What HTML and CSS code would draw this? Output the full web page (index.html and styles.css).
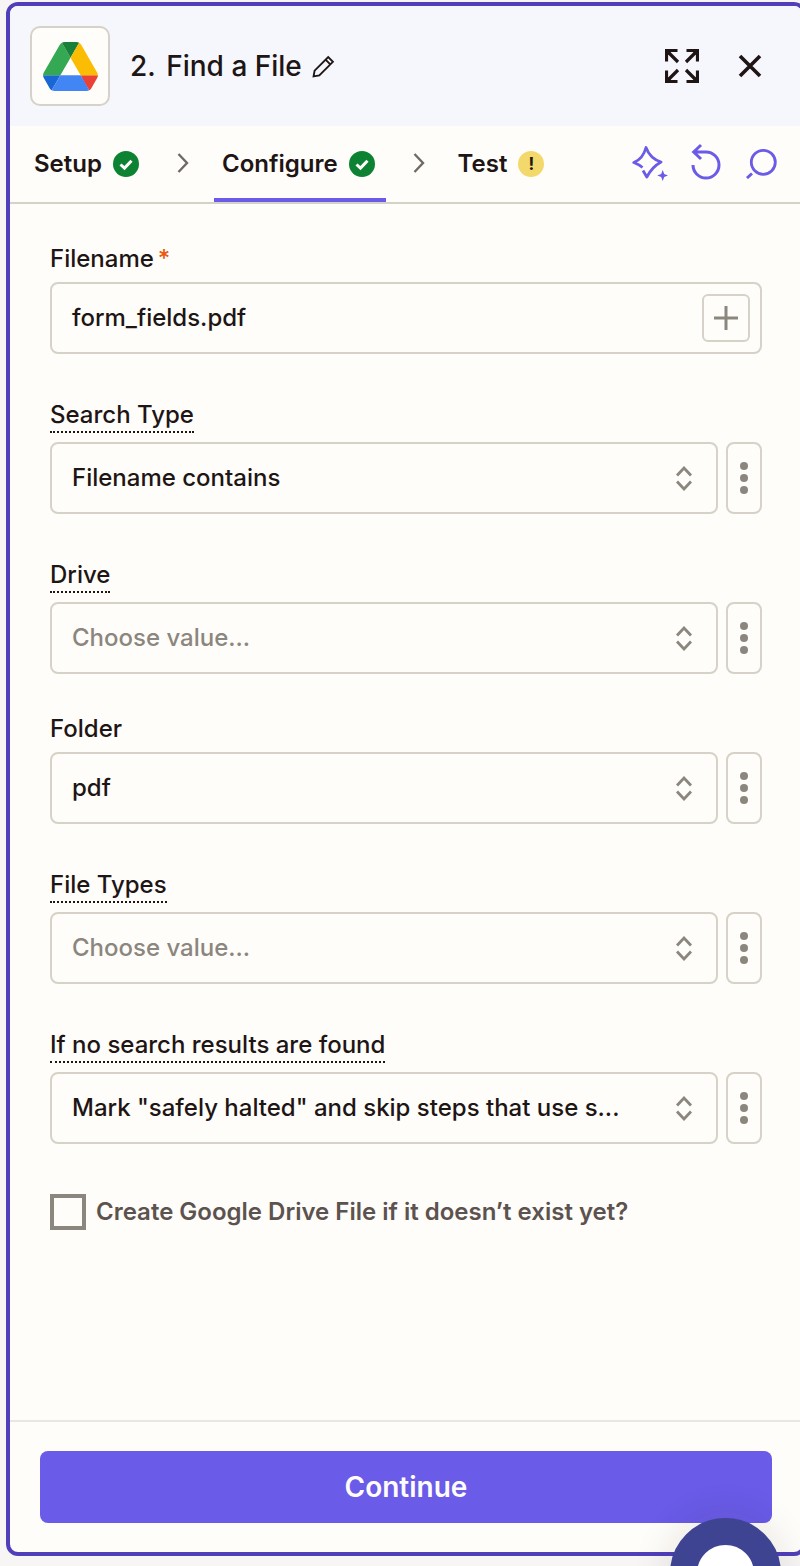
FILE: index.html
```html
<!DOCTYPE html>
<html lang="en">
<head>
<meta charset="utf-8">
<title>Find a File</title>
<link rel="stylesheet" href="styles.css">
</head>
<body>
<svg class="sprite" aria-hidden="true">
  <symbol id="check" viewBox="0 0 26 26"><circle cx="13" cy="13" r="13" fill="#0d8232"/><path d="M7.500 13.500l4 3.600 7-7.400" fill="none" stroke="#fffdf9" stroke-width="3"/></symbol>
  <symbol id="chev" viewBox="0 0 12 22"><path d="M1.500 2L10 11l-8.500 9" fill="none" stroke="#6f6a64" stroke-width="2.400"/></symbol>
  <symbol id="updown" viewBox="0 0 16 25"><path d="M1 9.500L8 2l7 7.500M1 15.500L8 23l7-7.500" fill="none" stroke="#8b867e" stroke-width="2.800"/></symbol>
  <symbol id="dots" viewBox="0 0 8 32"><circle cx="4" cy="4" r="4" fill="#8b867e"/><circle cx="4" cy="16" r="4" fill="#8b867e"/><circle cx="4" cy="28" r="4" fill="#8b867e"/></symbol>
</svg>
<section class="panel">
  <header class="head">
    <div class="app-tile">
      <svg class="drive" viewBox="0 0 87.300 78">
        <path d="m6.600 66.850 3.850 6.650c.8 1.400 1.950 2.500 3.300 3.300l13.750-23.800h-27.500c0 1.550.4 3.100 1.200 4.500z" fill="#1967d2"/>
        <path d="m43.650 25-13.750-23.800c-1.350.8-2.500 1.900-3.300 3.300l-25.400 44a9.060 9.060 0 0 0 -1.200 4.500h27.500z" fill="#34a853"/>
        <path d="m73.550 76.800c1.350-.8 2.500-1.900 3.300-3.300l1.600-2.750 7.650-13.250c.8-1.400 1.200-2.950 1.200-4.500h-27.502l5.852 11.500z" fill="#ea4335"/>
        <path d="m43.650 25 13.750-23.800c-1.350-.8-2.900-1.200-4.500-1.200h-18.500c-1.600 0-3.150.45-4.500 1.200z" fill="#188038"/>
        <path d="m59.800 53h-32.300l-13.750 23.800c1.350.8 2.900 1.200 4.500 1.200h50.800c1.600 0 3.150-.45 4.500-1.200z" fill="#4285f4"/>
        <path d="m73.400 26.500-12.700-22c-.8-1.400-1.950-2.500-3.300-3.300l-13.750 23.800 16.150 28h27.450c0-1.550-.4-3.100-1.200-4.500z" fill="#fbbc04"/>
      </svg>
    </div>
    <h1 class="title"><span class="num">2.</span> Find a File</h1>
    <svg class="pencil" viewBox="0 0 22 22"><path d="M1.500 20.500l1-5.500L15.500 2l4.500 4.500L7 19.500zM13 4.500l4.500 4.500" fill="none" stroke="#201515" stroke-width="1.800"/></svg>
    <div class="head-actions">
      <svg class="expand" viewBox="0 0 34 34"><path d="M0 0H9L0 9zM34 0H25L34 9zM0 34H9L0 25zM34 34H25L34 25z" fill="#201515"/><path d="M1.500 12.500V1.500H12.500M3 3l10 10M21.500 1.500H32.500V12.500M31 3L21 13M1.500 21.500V32.500H12.500M3 31l10-10M21.500 32.500H32.500V21.500M31 31L21 21" fill="none" stroke="#201515" stroke-width="3.200"/></svg>
      <svg class="close" viewBox="0 0 24 24"><path d="M2 2l20 20M22 2L2 22" fill="none" stroke="#201515" stroke-width="3.600"/></svg>
    </div>
  </header>
  <nav class="tabs">
    <div class="tab"><span class="tab-text">Setup</span><svg class="badge"><use href="#check"/></svg></div>
    <div class="sep"><svg class="chev"><use href="#chev"/></svg></div>
    <div class="tab active"><span class="tab-text">Configure</span><svg class="badge"><use href="#check"/></svg></div>
    <div class="sep"><svg class="chev"><use href="#chev"/></svg></div>
    <div class="tab"><span class="tab-text">Test</span><span class="warn">!</span></div>
    <div class="tools">
      <svg class="sparkle" viewBox="0 0 36 38"><path d="M10.500 24.500Q7 21.500 1.800 19.500 11 16 14 4.500 18 15.500 29 19 20 24 14.800 34L11 27.500" fill="none" stroke="#6a5be8" stroke-width="2.800" stroke-linejoin="round"/><path d="M30.700 27l1.500 4 4 1.500-4 1.500-1.500 4-1.500-4-4-1.500 4-1.500z" fill="#6a5be8"/></svg>
      <svg class="undo" viewBox="0 0 32 38"><path d="M2 22A13 13 0 1 0 15 9H3M10 2L2.700 9l7.300 7" fill="none" stroke="#6a5be8" stroke-width="3"/></svg>
      <svg class="search" viewBox="0 0 32 34"><circle cx="17.300" cy="17.300" r="12" fill="none" stroke="#6a5be8" stroke-width="2.800"/><path d="M6 28.500L1 33" fill="none" stroke="#6a5be8" stroke-width="3"/></svg>
    </div>
  </nav>
  <main class="form">
    <div class="field">
      <div class="label">Filename<span class="req">*</span></div>
      <div class="input has-add"><span class="val">form_fields.pdf</span>
        <span class="add"><svg class="plus" viewBox="0 0 24 24"><path d="M12 0v24M0 12h24" stroke="#8b867e" stroke-width="3"/></svg></span>
      </div>
    </div>
    <div class="field">
      <div class="label tip"><span>Search Type</span></div>
      <div class="row">
        <div class="input"><span class="val">Filename contains</span><svg class="updown"><use href="#updown"/></svg></div>
        <div class="more"><svg class="dots"><use href="#dots"/></svg></div>
      </div>
    </div>
    <div class="field">
      <div class="label tip"><span>Drive</span></div>
      <div class="row">
        <div class="input ph"><span class="val">Choose value...</span><svg class="updown"><use href="#updown"/></svg></div>
        <div class="more"><svg class="dots"><use href="#dots"/></svg></div>
      </div>
    </div>
    <div class="field">
      <div class="label">Folder</div>
      <div class="row">
        <div class="input"><span class="val">pdf</span><svg class="updown"><use href="#updown"/></svg></div>
        <div class="more"><svg class="dots"><use href="#dots"/></svg></div>
      </div>
    </div>
    <div class="field">
      <div class="label tip"><span>File Types</span></div>
      <div class="row">
        <div class="input ph"><span class="val">Choose value...</span><svg class="updown"><use href="#updown"/></svg></div>
        <div class="more"><svg class="dots"><use href="#dots"/></svg></div>
      </div>
    </div>
    <div class="field">
      <div class="label tip"><span>If no search results are found</span></div>
      <div class="row">
        <div class="input"><span class="val">Mark "safely halted" and skip steps that use s...</span><svg class="updown"><use href="#updown"/></svg></div>
        <div class="more"><svg class="dots"><use href="#dots"/></svg></div>
      </div>
    </div>
    <div class="check-row">
      <span class="box"></span>
      <span class="check-text">Create Google Drive File if it doesn’t exist yet?</span>
    </div>
  </main>
  <footer class="foot">
    <div class="continue">Continue</div>
  </footer>
</section>
<div class="help"></div>
</body>
</html>
```

FILE: styles.css
```css
* { box-sizing: border-box; }
html, body { margin: 0; height: 1566px; overflow: hidden; }
body {
  position: relative;
  background: #f7f6f4;
  font-family: Inter, "Liberation Sans", sans-serif;
  color: #201515;
  padding: 2px 0 0 6px;
}
.sprite { display: none; }
.panel {
  width: 800px;
  height: 1554px;
  border: 4px solid #4f3fbb;
  border-radius: 12px;
  background: #fffdf9;
  display: flex;
  flex-direction: column;
  overflow: hidden;
}
.head {
  height: 120px;
  flex: none;
  background: #f6f6fd;
  display: flex;
  align-items: center;
  padding: 0 40px 0 20px;
}
.app-tile {
  width: 80px;
  height: 80px;
  flex: none;
  background: #fffdf9;
  border: 2px solid #d6d2c8;
  border-radius: 10px;
  display: flex;
  align-items: center;
  justify-content: center;
}
.drive { width: 55px; height: 49px; }
.title {
  margin: 0 0 0 20px;
  font-size: 28px;
  font-weight: 500;
  line-height: 40px;
}
.num { margin-right: 3px; }
.pencil { width: 23px; height: 23px; margin-left: 10px; }
.head-actions {
  margin-left: auto;
  display: flex;
  align-items: center;
  gap: 39px;
}
.expand { width: 34px; height: 34px; }
.close { width: 24px; height: 24px; }
.tabs {
  height: 78px;
  flex: none;
  display: flex;
  align-items: stretch;
  padding-left: 16px;
  border-bottom: 2px solid #d6d2c8;
  font-size: 24px;
  font-weight: 600;
}
.tab {
  display: flex;
  align-items: center;
  gap: 11px;
  padding: 0 11px 0 8px;
  height: 76px;
}
.tab-text { padding-bottom: 2px; }
.tab.active { border-bottom: 4px solid #6a5be8; padding-top: 4px; }
.sep {
  width: 64px;
  display: flex;
  align-items: center;
  justify-content: center;
  padding: 0 0 2px 2px;
}
.chev { width: 12px; height: 22px; }
.badge { width: 26px; height: 26px; }
.warn {
  width: 26px;
  height: 26px;
  border-radius: 50%;
  background: #f3d96b;
  font-size: 17px;
  font-weight: 700;
  line-height: 26px;
  text-align: center;
}
.tools {
  margin-left: auto;
  display: flex;
  align-items: center;
  padding: 0 24px 4px 0;
}
.sparkle { width: 36px; height: 38px; }
.undo { width: 32px; height: 38px; margin-left: 23px; }
.search { width: 32px; height: 34px; margin-left: 23px; }
.form {
  flex: 1;
  padding: 38px 40px 0;
  display: flex;
  flex-direction: column;
  gap: 38px;
}
.label {
  font-size: 24px;
  font-weight: 500;
  line-height: 32px;
  padding-top: 1px;
  margin-bottom: 7px;
}
.req { color: #e8590c; margin-left: 4px; }
.label.tip {
  padding-top: 7px;
  margin-bottom: 9px;
  height: 41px;
}
.label.tip span {
  display: inline-block;
  height: 34px;
  border-bottom: 2px dotted #201515;
}
.row {
  display: grid;
  grid-template-columns: 1fr 36px;
  gap: 8px;
}
.input {
  height: 72px;
  border: 2px solid #d6d2c8;
  border-radius: 8px;
  background: #fffdf9;
  display: flex;
  align-items: center;
  justify-content: space-between;
  padding: 0 24px 0 20px;
  font-size: 24px;
  font-weight: 500;
  white-space: nowrap;
}
.val { padding-bottom: 2px; }
.input.has-add { padding-right: 10px; }
.input.ph { color: #8b867e; }
.updown { width: 16px; height: 25px; flex: none; }
.add {
  width: 48px;
  height: 48px;
  border: 2px solid #d6d2c8;
  border-radius: 6px;
  display: flex;
  align-items: center;
  justify-content: center;
}
.plus { width: 24px; height: 24px; }
.more {
  height: 72px;
  border: 2px solid #d6d2c8;
  border-radius: 8px;
  display: flex;
  align-items: center;
  justify-content: center;
}
.dots { width: 8px; height: 32px; }
.check-row {
  display: flex;
  align-items: center;
  gap: 10px;
  margin-top: 12px;
}
.box {
  width: 36px;
  height: 36px;
  border: 4px solid #8b867e;
  background: #fffdf9;
}
.check-text {
  font-size: 24px;
  font-weight: 600;
  color: #5c5350;
  padding-bottom: 2px;
}
.foot {
  height: 132px;
  flex: none;
  border-top: 2px solid #e9e7e2;
  padding: 29px 30px;
}
.continue {
  height: 72px;
  border-radius: 8px;
  background: #6a5be8;
  color: #fffdf9;
  font-size: 28px;
  font-weight: 600;
  display: flex;
  align-items: center;
  justify-content: center;
}
.help {
  position: absolute;
  left: 670px;
  top: 1518px;
  width: 111px;
  height: 111px;
  border-radius: 50%;
  border: 27px solid #3e4491;
  background: #fff;
  box-shadow: 0 0 40px rgba(32, 21, 21, .12);
}
```
